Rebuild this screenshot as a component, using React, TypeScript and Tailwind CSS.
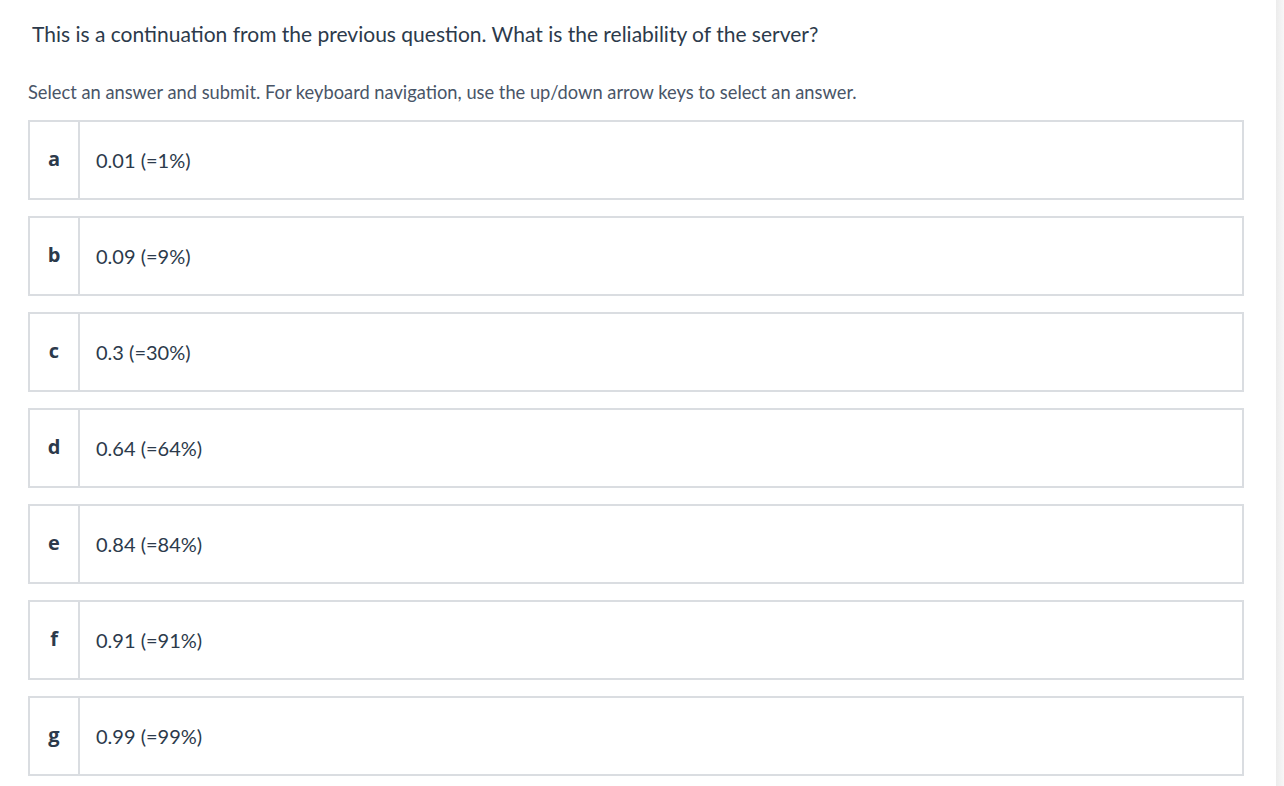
const options = [
  { key: "a", label: "0.01 (=1%)" },
  { key: "b", label: "0.09 (=9%)" },
  { key: "c", label: "0.3 (=30%)" },
  { key: "d", label: "0.64 (=64%)" },
  { key: "e", label: "0.84 (=84%)" },
  { key: "f", label: "0.91 (=91%)" },
  { key: "g", label: "0.99 (=99%)" },
];

export default function App() {
  return (
    <div className="flex min-h-screen bg-white font-['Lato',sans-serif] text-[#2c3a4b]">
      <main className="flex-1 pl-[28px] pr-[32px]">
        <h1 className="pl-[4px] pt-[21px] text-[21px] leading-[26px]">
          This is a continuation from the previous question. What is the reliability of the server?
        </h1>
        <p className="pt-[34px] text-[18.3px] leading-[22px] text-[#495567]">
          Select an answer and submit. For keyboard navigation, use the up/down arrow keys to select an answer.
        </p>
        <ul className="mt-[17px] flex flex-col gap-[16px]">
          {options.map((o) => (
            <li key={o.key} className="flex h-[80px] border-2 border-[#dadde1] bg-white">
              <span className="flex w-[50px] items-center justify-center border-r-2 border-[#dadde1] pb-[2px] font-['Open_Sans',sans-serif] text-[20px] font-bold">
                {o.key}
              </span>
              <span className="flex items-center pl-[16px] text-[20px]">{o.label}</span>
            </li>
          ))}
        </ul>
      </main>
      <div className="w-[8px] bg-gradient-to-r from-[#ececec] to-[#f7f7f7]" />
    </div>
  );
}
